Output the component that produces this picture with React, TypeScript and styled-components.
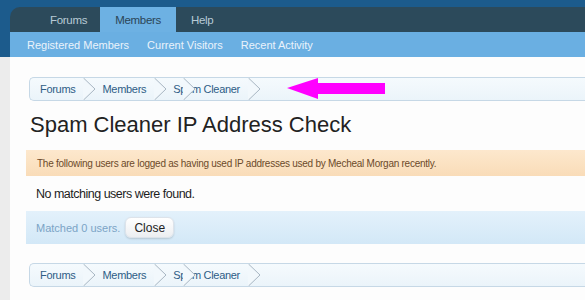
import styled, { createGlobalStyle } from "styled-components";

const GlobalStyle = createGlobalStyle`
    html, body {
        margin: 0;
        padding: 0;
        background: #ececec;
        font-family: "Liberation Sans", Arial, sans-serif;
        overflow: hidden;
    }
`;

const crumbs = ["Forums", "Members"];

const Chevron = () => (
    <ChevronSvg width="13" height="22" viewBox="0 0 13 22">
        <polygon points="0,0 12,11 0,22" fill="#f2f8fc" />
        <polyline points="0.5,0 12,11 0.5,22" fill="none" stroke="#a8b6c2" strokeWidth="1" />
    </ChevronSvg>
);

const Breadcrumb = ({ arrow }: { arrow?: boolean }) => (
    <Crumbs>
        {crumbs.map((c) => (
            <CrumbWrap key={c}>
                <Crumb>{c}</Crumb>
                <Chevron />
            </CrumbWrap>
        ))}
        <CrumbWrap>
            <Crumb>
                Sp
                <Overlap>
                    <Chevron />
                </Overlap>
                am Cleaner
            </Crumb>
            <Chevron />
        </CrumbWrap>
        {arrow && (
            <Pointer width="100" height="22" viewBox="0 0 100 22">
                <polygon points="0,10 31,0 31,5 98,5 98,16 31,16 31,21" fill="#ff00ff" />
            </Pointer>
        )}
    </Crumbs>
);

const App = () => {
    return (
        <>
            <GlobalStyle />
            <Header>
                <Tabs>
                    <Tab>Forums</Tab>
                    <Tab active>Members</Tab>
                    <Tab>Help</Tab>
                </Tabs>
                <SubNav>
                    <SubLink>Registered Members</SubLink>
                    <SubLink>Current Visitors</SubLink>
                    <SubLink>Recent Activity</SubLink>
                </SubNav>
            </Header>
            <Page>
                <Content>
                    <Breadcrumb arrow />
                    <Title>Spam Cleaner IP Address Check</Title>
                    <Notice>
                        The following users are logged as having used IP addresses used by Mecheal Morgan recently.
                    </Notice>
                    <Empty>No matching users were found.</Empty>
                    <Footer>
                        <Matched>Matched 0 users.</Matched>
                        <CloseButton>Close</CloseButton>
                    </Footer>
                    <Bottom>
                        <Breadcrumb />
                    </Bottom>
                </Content>
            </Page>
        </>
    );
};

export default App;

const Header = styled.div`
    background: #1c5b8c;
    padding: 7px 0 0 10px;
`;

const Tabs = styled.div`
    display: flex;
    height: 25px;
    background: #2c4a5b;
    border-radius: 10px 0 0 0;
    padding-left: 24px;
`;

const Tab = styled.div<{ active?: boolean }>`
    display: flex;
    align-items: center;
    padding: 0 15px;
    font-size: 11.5px;
    letter-spacing: -0.3px;
    color: ${(p) => (p.active ? "#2b4556" : "#b8cad6")};
    background: ${(p) => (p.active ? "#6db1e3" : "transparent")};
    &:first-child {
        padding-left: 16px;
        padding-right: 13px;
    }
`;

const SubNav = styled.div`
    display: flex;
    align-items: center;
    gap: 18px;
    height: 25px;
    background: #6aafe2;
    padding-left: 17px;
`;

const SubLink = styled.span`
    font-size: 11px;
    color: #eaf3fb;
`;

const Page = styled.div`
    padding-left: 10px;
`;

const Content = styled.div`
    background: #fdfdfd;
    padding: 20px 0 20px 16px;
    min-height: 300px;
`;

const Crumbs = styled.div`
    position: relative;
    display: flex;
    align-items: center;
    height: 22px;
    margin-left: 3px;
    padding-left: 10px;
    background: linear-gradient(#f5fafd, #ebf4fa);
    border: 1px solid #c6d8e6;
    border-right: none;
    border-radius: 5px 0 0 5px;
`;

const CrumbWrap = styled.div`
    display: flex;
    align-items: center;
    height: 100%;
`;

const Crumb = styled.span`
    position: relative;
    font-size: 11px;
    letter-spacing: -0.3px;
    color: #2e5d86;
    margin-right: 8px;
`;

const Overlap = styled.span`
    position: absolute;
    left: 10px;
    top: -5px;
    height: 22px;
`;

const ChevronSvg = styled.svg`
    display: block;
    margin-right: 6px;
`;

const Pointer = styled.svg`
    position: absolute;
    left: 257px;
    top: 0;
`;

const Title = styled.h1`
    margin: 11px 0 12px 4px;
    font-size: 22px;
    font-weight: normal;
    color: #222;
    line-height: 26px;
`;

const Notice = styled.div`
    height: 26px;
    display: flex;
    align-items: center;
    padding-left: 11px;
    font-size: 10px;
    letter-spacing: -0.25px;
    color: #6c4a2a;
    background: linear-gradient(#fde8cd, #f9dcb8);
`;

const Empty = styled.div`
    height: 35px;
    display: flex;
    align-items: center;
    padding-left: 10px;
    font-size: 12.5px;
    letter-spacing: -0.5px;
    color: #1e1e1e;
`;

const Footer = styled.div`
    height: 33px;
    display: flex;
    align-items: center;
    gap: 5px;
    padding-left: 10px;
    background: linear-gradient(#e3f1fb, #d3e8f7);
`;

const Matched = styled.span`
    font-size: 11px;
    color: #7ba4c6;
`;

const CloseButton = styled.button`
    font-family: inherit;
    font-size: 12px;
    color: #222;
    height: 21px;
    padding: 0 8px;
    border: 1px solid #dde3ea;
    border-radius: 6px;
    background: linear-gradient(#ffffff, #eceef1);
    box-shadow: 0 1px 2px rgba(0, 0, 0, 0.15);
`;

const Bottom = styled.div`
    margin-top: 19px;
`;
